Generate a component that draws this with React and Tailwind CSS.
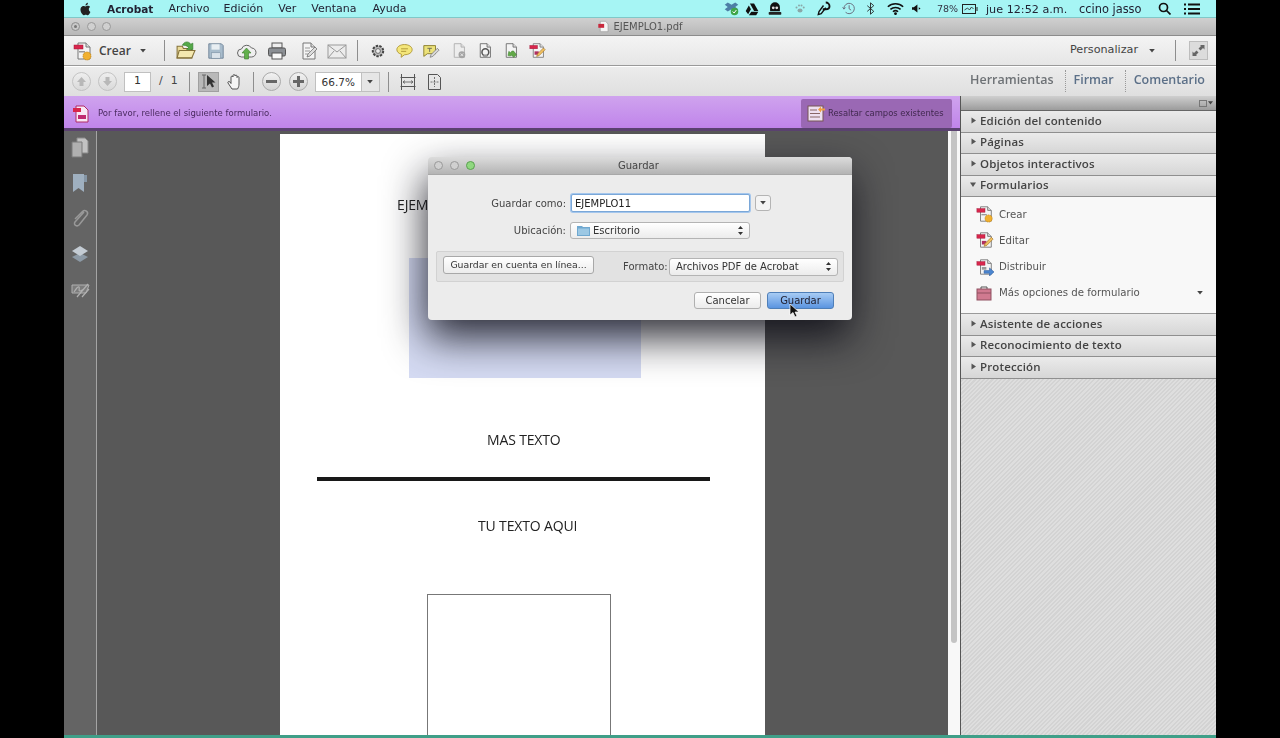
import React from 'react';

const font = { fontFamily: '"DejaVu Sans", sans-serif' };
const openSans = { fontFamily: '"Open Sans", sans-serif' };

// small page with a folded corner, shared by most toolbar icons
const Doc = ({ children, fill = '#f4f4f4', stroke = '#777' }) => (
  <>
    <path d="M5 2h8l4 4v12H5z" fill={fill} stroke={stroke} strokeWidth="1" />
    <path d="M13 2v4h4" fill="#ddd" stroke={stroke} strokeWidth="1" />
    {children}
  </>
);

const Ico = ({ w = 20, h = 20, children, className = '' }) => (
  <svg width={w} height={h} viewBox="0 0 20 20" className={`shrink-0 ${className}`}>{children}</svg>
);

const FormDoc = ({ children }) => (
  <Doc>
    <rect x="1" y="4" width="9" height="4" fill="#d8264c" stroke="#a01838" strokeWidth=".5" />
    {children}
  </Doc>
);

const EditarPaths = () => (
  <FormDoc>
    <rect x="6.5" y="11" width="5" height="4" fill="#b03060" />
    <path d="M9 17l1-3 7-7 2 2-7 7z" fill="#f0c060" stroke="#a07020" strokeWidth=".7" />
  </FormDoc>
);

const CrearIcon = ({ w = 20, h = 20 }) => (
  <Ico w={w} h={h}>
    <FormDoc>
      <rect x="6" y="10" width="6" height="1.5" fill="#999" />
      <circle cx="14" cy="15" r="4" fill="#f0b030" stroke="#b87a10" strokeWidth=".7" strokeDasharray="1.5 .7" />
    </FormDoc>
  </Ico>
);

const EditarIcon = ({ w = 18, h = 18 }) => (
  <Ico w={w} h={h}><EditarPaths /></Ico>
);

const DistIcon = ({ w = 18, h = 18 }) => (
  <Ico w={w} h={h}>
    <FormDoc>
      <rect x="6.5" y="10" width="5" height="3" fill="#999" />
      <path d="M9 14h6v-3l5 4.500-5 4.500v-3H9z" fill="#4b86d0" stroke="#2a5a9a" strokeWidth=".6" />
    </FormDoc>
  </Ico>
);

// status icons on the right of the menu bar
const MenuIcons = () => (
  <>
    <svg width="15" height="15" viewBox="0 0 20 20" className="absolute left-[660px] top-[1px]">
      <path d="M1 5l4-3 5 3 5-3 4 3-4 3 4 3-4 3-5-3-5 3-4-3 4-3z" fill="#4d7fa6" />
      <circle cx="14" cy="14" r="5" fill="#3fa648" />
      <path d="M11.5 14l2 2 3-4" fill="none" stroke="#fff" strokeWidth="1.3" />
    </svg>
    <svg width="14" height="14" viewBox="0 0 20 20" className="absolute left-[681px] top-[2px]">
      <path d="M7 2h6l6 11h-6zM5.5 5l3 5.500-4 7L1 13zM9 14h10l-3 5H5.500z" fill="#111" />
    </svg>
    <svg width="14" height="15" viewBox="0 0 20 20" className="absolute left-[704px] top-[1px]">
      <path d="M10 1a7 7 0 0 0-7 7v6h14V8a7 7 0 0 0-7-7z" fill="#111" />
      <circle cx="7.5" cy="9" r="2" fill="#ddd" />
      <circle cx="12.5" cy="9" r="2" fill="#ddd" />
      <rect x="1" y="15" width="18" height="4" rx="1" fill="#222" />
    </svg>
    <svg width="10" height="11" viewBox="0 0 20 20" className="absolute left-[731px] top-[3px]" fill="#8aa8a8">
      <ellipse cx="10" cy="14" rx="5" ry="4" />
      <circle cx="3" cy="8" r="2" />
      <circle cx="8" cy="4" r="2" />
      <circle cx="13" cy="4" r="2" />
      <circle cx="17.5" cy="8" r="2" />
    </svg>
    <svg width="15" height="15" viewBox="0 0 20 20" className="absolute left-[752px] top-[1px]" fill="none" stroke="#111">
      <path d="M13 2a5 5 0 0 1 5 5c0 3-3 4-5 4H9" strokeWidth="2.5" />
      <path d="M10 6l-6 8-1 4 4-1 6-8" strokeWidth="1.8" />
    </svg>
    <svg width="13" height="13" viewBox="0 0 20 20" className="absolute left-[778px] top-[2px]" fill="none" stroke="#667">
      <path d="M3 10a8 8 0 1 1 2.500 5.800" strokeWidth="1.4" />
      <path d="M11 5v5.500l3 2M1 8l2 3 2.500-2.500" strokeWidth="1.4" />
    </svg>
    <svg width="9" height="13" viewBox="0 0 10 16" className="absolute left-[802px] top-[2px]" fill="none" stroke="#222" strokeWidth="1.1">
      <path d="M1 4.500l8 7-4 3.500V1l4 3.500-8 7" />
    </svg>
    <svg width="17" height="13" viewBox="0 0 20 15" className="absolute left-[823px] top-[2px]" fill="none" stroke="#111" strokeWidth="1.8">
      <path d="M1 5.500a13 13 0 0 1 18 0M4 8.500a9 9 0 0 1 12 0M7 11.300a4.500 4.500 0 0 1 6 0" />
      <circle cx="10" cy="13.5" r=".8" fill="#111" />
    </svg>
    <svg width="9" height="9" viewBox="0 0 10 10" className="absolute left-[848px] top-[4px]" fill="#111">
      <path d="M0 3.500h2L6 .5v9l-4-3H0zM7.500 3.500l2 1.500-2 1.500z" />
    </svg>
    <span className="absolute left-[873px] top-[2px] text-[9.5px] leading-[13px] text-[#334]">78%</span>
    <svg width="16" height="10" viewBox="0 0 16 10" className="absolute left-[898px] top-[4px]" fill="none" stroke="#222">
      <rect x=".5" y=".5" width="13" height="9" />
      <path d="M15 3v4" />
      <path d="M2.500 6l3-2 2 2 2-3 2 2" strokeWidth=".8" />
    </svg>
    <span className="absolute left-[922px] top-[2px] text-[11.2px] leading-[15px] text-[#223]">jue 12:52 a.m.</span>
    <span className="absolute left-[1015px] top-[2px] text-[11.4px] leading-[15px] text-[#223]">ccino jasso</span>
    <svg width="13" height="13" viewBox="0 0 13 13" className="absolute left-[1094px] top-[2px]" fill="none" stroke="#111" strokeWidth="1.7">
      <circle cx="5.5" cy="5.5" r="4" />
      <path d="M8.500 8.500l4 4" />
    </svg>
    <svg width="16" height="12" viewBox="0 0 16 12" className="absolute left-[1120px] top-[3px]" fill="none" stroke="#111" strokeWidth="2">
      <path d="M4 1.500h12M4 6h12M4 10.500h12M0 1.500h2M0 6h2M0 10.500h2" />
    </svg>
  </>
);

const Sep = ({ h = 'h-[21px]', ml }) => <div className={`w-px bg-[#8e8e8e] ${h} ${ml}`} />;

const Caret = ({ className = '' }) => (
  <svg width="6" height="4" viewBox="0 0 7 5" className={className}><path d="M0 0h7L3.500 4.500z" fill="#444" /></svg>
);

const ToolbarOne = () => (
  <div className="flex h-[30px] items-center border-b border-[#9a9a9a] bg-gradient-to-b from-[#f4f4f4] to-[#e6e6e6] pl-[9px]">
    <CrearIcon />
    <span className="ml-[6px] w-[31px] text-[12px] font-semibold text-[#444]" style={openSans}>Crear</span>
    <Caret className="ml-[10px]" />
    <Sep ml="ml-[18px]" />
    <Ico w={21} h={21} className="ml-[10px]">
      <path d="M2 17V6h5l1 2h8v9z" fill="#eadb9a" stroke="#84713a" />
      <path d="M2 17l2-7h15l-3 7z" fill="#f4e8b0" stroke="#84713a" />
      <path d="M7 5c2-4 6-4 8-1l2-1v6h-6l2-2c-2-2-4-2-6-2z" fill="#54a848" stroke="#2f7a2a" strokeWidth=".6" />
    </Ico>
    <Ico w={18} h={18} className="ml-[11px]">
      <path d="M2 2h14l2 2v14H2z" fill="#a8bccc" stroke="#6c8196" />
      <rect x="5" y="2.5" width="9" height="6" fill="#e8eef2" />
      <rect x="5" y="12" width="10" height="6" fill="#dbe3ea" stroke="#6c8196" strokeWidth=".5" />
    </Ico>
    <Ico w={21} h={20} className="ml-[11px]">
      <path d="M5 16a4 4 0 0 1 0-8 5.500 5.500 0 0 1 10-1 4.500 4.500 0 0 1 0 9z" fill="#efefef" stroke="#666" />
      <path d="M10 7l4.500 5H12v6H8v-6H5.500z" fill="#62b04c" stroke="#3c7e2e" strokeWidth=".6" />
    </Ico>
    <Ico w={20} h={20} className="ml-[10px]">
      <rect x="5" y="2" width="10" height="5" fill="#eee" stroke="#555" />
      <rect x="1.5" y="7" width="17" height="8" rx="1.5" fill="#8b8f94" stroke="#555" />
      <rect x="5" y="12" width="10" height="6" fill="#fafafa" stroke="#555" />
    </Ico>
    <Ico w={20} h={20} className="ml-[11px]">
      <Doc><path d="M7 7h5M7 10h5M7 13h3" stroke="#999" /><path d="M9 16l1-3 7-7 2 2-7 7z" fill="#ddd" stroke="#666" strokeWidth=".7" /></Doc>
    </Ico>
    <Ico w={20} h={20} className="ml-[9px]">
      <rect x="1" y="4" width="18" height="13" fill="#ececec" stroke="#999" />
      <path d="M1 4l9 7 9-7M1 17l6-7M19 17l-6-7" fill="none" stroke="#999" />
    </Ico>
    <Sep ml="ml-[10px]" />
    <Ico w={16} h={16} className="ml-[12px]">
      <circle cx="10" cy="10" r="6.5" fill="#bbb" stroke="#444" strokeWidth="2.5" strokeDasharray="3 1.500" />
      <circle cx="10" cy="10" r="3" fill="#eee" stroke="#555" />
    </Ico>
    <Ico w={17} h={17} className="ml-[10px]">
      <path d="M10 3c5 0 9 2.500 9 6s-4 6-9 6l-4 3 .5-3.500C3 13.500 1 11.500 1 9c0-3.500 4-6 9-6z" fill="#f4e67a" stroke="#a89030" />
      <path d="M6 8h8M6 11h6" stroke="#a89030" />
    </Ico>
    <Ico w={18} h={18} className="ml-[9px]">
      <path d="M2 4h13v9H6l-4 3z" fill="#ece27a" stroke="#877a28" />
      <path d="M6 7h5M8.500 7v4" stroke="#665" />
      <path d="M9 17l1-3 7-7 2 2-7 7z" fill="#d8d8d8" stroke="#666" strokeWidth=".7" />
    </Ico>
    <Ico w={17} h={17} className="ml-[10px]">
      <Doc fill="#ededed" stroke="#aaa"><circle cx="14" cy="15" r="4" fill="#a4a4a4" /><path d="M12.500 13.500l3 3M15.500 13.500l-3 3" stroke="#eee" /></Doc>
    </Ico>
    <Ico w={17} h={17} className="ml-[9px]">
      <Doc stroke="#666"><circle cx="11" cy="12" r="4" fill="none" stroke="#555" strokeWidth="1.8" /><path d="M9 15l-1 4 3-1.500 3 1.500-1-4" fill="#999" /></Doc>
    </Ico>
    <Ico w={17} h={17} className="ml-[9px]">
      <Doc stroke="#666"><path d="M7 16l1-5 2 1.500c1-2 3-2.500 4-1.500l3 4-3 3-3-2.500-1 1z" fill="#62a848" stroke="#3c7e2e" strokeWidth=".6" /></Doc>
    </Ico>
    <Ico w={17} h={17} className="ml-[10px]">
      <EditarPaths />
    </Ico>
    <span className="ml-[524px] w-[67px] whitespace-nowrap text-[11.2px] text-[#444]">Personalizar</span>
    <Caret className="ml-[12px]" />
    <Sep ml="ml-[20px]" />
    <div className="ml-[13px] flex h-[19px] w-[19px] items-center justify-center border border-[#bdbdbd] bg-[#dcdcdc]">
      <svg width="15" height="15" viewBox="0 0 15 15" fill="#666">
        <path d="M9 2h4.500v4.500L12 5 9.500 7.500 7.500 5.500 10 3zM6 13H1.500V8.500L3 10l2.500-2.500 2 2L5 12z" />
      </svg>
    </div>
  </div>
);

const RoundBtn = ({ children, className = '' }) => (
  <div className={`flex h-[19px] w-[19px] shrink-0 items-center justify-center rounded-full border border-[#aaa] bg-gradient-to-b from-[#f2f2f2] to-[#d4d4d4] ${className}`}>
    {children}
  </div>
);

const ToolbarTwo = () => (
  <div className="flex h-[30px] items-center border-t border-white bg-gradient-to-b from-[#ececec] to-[#dfdfdf] pl-[8px]">
    <RoundBtn className="opacity-60">
      <svg width="11" height="11" viewBox="0 0 11 11" fill="#999"><path d="M5.500 1L10 6H7.500v4h-4V6H1z" /></svg>
    </RoundBtn>
    <RoundBtn className="ml-[7px] opacity-60">
      <svg width="11" height="11" viewBox="0 0 11 11" fill="#999"><path d="M5.500 10L10 5H7.500V1h-4v4H1z" /></svg>
    </RoundBtn>
    <div className="ml-[7px] flex h-[20px] w-[27px] items-center justify-center border border-[#c0c0c0] bg-white text-[11px] text-[#333]">1</div>
    <span className="ml-[8px] text-[11px] text-[#444]">/</span>
    <span className="ml-[8px] text-[11px] text-[#444]">1</span>
    <Sep ml="ml-[11px]" h="h-[20px]" />
    <div className="ml-[8px] flex h-[20px] w-[21px] items-center justify-center border border-[#a0a0a0] bg-[#b9b9b9]">
      <svg width="17" height="17" viewBox="0 0 17 17">
        <path d="M2 2h4M2 15h4M4 2v13" stroke="#666" fill="none" />
        <path d="M7 2v11l3-2.500 2 4 2-1-2-4h3.500z" fill="#333" />
      </svg>
    </div>
    <svg width="17" height="18" viewBox="0 0 17 18" className="ml-[8px]" fill="#f5f5f5" stroke="#444" strokeWidth=".9">
      <path d="M5 16c-1-2-3-4-4-6-.7-1.400 1-2 2-1l1 1.500V4c0-1.200 2-1.200 2 0V2.500c0-1.200 2-1.200 2 0V3c0-1.200 2-1.200 2 0v1.500c0-1.200 2-1.200 2 0V11c0 2-.5 3.500-1.500 5z" />
    </svg>
    <Sep ml="ml-[9px]" h="h-[20px]" />
    <RoundBtn className="ml-[8px]">
      <div className="h-[3px] w-[11px] bg-[#666]" />
    </RoundBtn>
    <RoundBtn className="ml-[8px]">
      <svg width="13" height="13" viewBox="0 0 13 13" fill="#666"><path d="M5 1h3v4h4v3H8v4H5V8H1V5h4z" /></svg>
    </RoundBtn>
    <div className="ml-[7px] flex h-[20px] w-[65px] border border-[#c0c0c0] bg-white">
      <span className="flex-1 text-center text-[10.5px] leading-[18px] text-[#333]">66.7%</span>
      <div className="flex w-[18px] items-center justify-center border-l border-[#c0c0c0] bg-[#e6e6e6]"><Caret /></div>
    </div>
    <Sep ml="ml-[8px]" h="h-[20px]" />
    <svg width="16" height="18" viewBox="0 0 16 18" className="ml-[11px]" fill="none" stroke="#555">
      <path d="M.5 4.500h15M.5 13.500h15M1.500 1v16M14.500 1v16" />
      <path d="M3 9h10M3 9l2-1.500M3 9l2 1.500M13 9l-2-1.500M13 9l-2 1.500" strokeWidth=".8" />
    </svg>
    <svg width="15" height="18" viewBox="0 0 15 18" className="ml-[11px]" fill="none" stroke="#555">
      <path d="M1.500 1.500h9l3 3v12h-12z" />
      <path d="M7.500 4v10M3.500 9h8" strokeWidth=".8" strokeDasharray="2 1" />
    </svg>
    <div className="ml-auto flex h-[30px] items-center pb-[2px] pr-[11px] text-[12.5px] font-semibold" style={openSans}>
      <span className="text-[#6e7276]">Herramientas</span>
      <div className="ml-[11px] h-[22px] border-l border-dotted border-[#999]" />
      <span className="ml-[8px] text-[#5c7088]">Firmar</span>
      <div className="ml-[11px] h-[22px] border-l border-dotted border-[#999]" />
      <span className="ml-[8px] text-[#5c7088]">Comentario</span>
    </div>
  </div>
);

const NoticeBar = () => (
  <div className="flex h-[35px] shrink-0 items-center border-b-[3px] border-[#5b4270] bg-gradient-to-b from-[#cfa3ee] to-[#c084ea] pl-[7px] pr-[8px] pt-[3px]">
    <svg width="20" height="20" viewBox="0 0 20 20">
      <path d="M5 2h8l4 4v12H5z" fill="#f8e8f4" stroke="#b02a66" />
      <rect x="2" y="4" width="8" height="4" fill="#d8264c" />
      <rect x="7" y="11" width="8" height="4" fill="#c02a70" />
    </svg>
    <span className="ml-[7px] text-[8.5px] text-[#4a2a60]">Por favor, rellene el siguiente formulario.</span>
    <div className="ml-auto flex h-[29px] w-[151px] items-center rounded-[2px] bg-[#9a68b4] pl-[6px]">
      <svg width="18" height="17" viewBox="0 0 18 17">
        <rect x="1" y="1" width="15" height="15" fill="#eee0f0" stroke="#755" />
        <path d="M3 5h7M3 8.500h10M3 12h10" stroke="#866" />
        <path d="M11 4.500l3-3v2h4v2h-4v2z" fill="#f0a040" />
      </svg>
      <span className="ml-[3px] whitespace-nowrap text-[8.4px] text-[#40284e]">Resaltar campos existentes</span>
    </div>
  </div>
);

const LeftRail = () => (
  <div className="flex w-[33px] shrink-0 flex-col items-center gap-[15px] border-r border-[#a4a4a4] bg-[#646464] pt-[6px]">
    <svg width="20" height="21" viewBox="0 0 20 21">
      <path d="M7 1h8l3 3v12H7z" fill="#c2c2c2" stroke="#8a8a8a" />
      <path d="M2 5h10v15H2z" fill="#b0b0b0" stroke="#7a7a7a" />
    </svg>
    <svg width="16" height="20" viewBox="0 0 16 20">
      <path d="M1 1h11v18l-5.500-4L1 19z" fill="#9fb0c0" />
      <path d="M12 2h3v7h-3z" fill="#8596a6" />
    </svg>
    <svg width="20" height="21" viewBox="0 0 20 21" fill="none" stroke="#999" strokeWidth="1.5">
      <path d="M14 4L5 14c-2 3 2 5 4 3l8-10c2-3-2-6-4.500-3.500L5 11" />
    </svg>
    <svg width="18" height="20" viewBox="0 0 18 18">
      <path d="M9 8l8 4-8 5-8-5z" fill="#8d9aa6" />
      <path d="M9 1l8 5-8 5-8-5z" fill="#c4ccd4" />
    </svg>
    <svg width="19" height="17" viewBox="0 0 19 15" fill="none" stroke="#b0b0b0" className="mt-[3px]">
      <path d="M1 2h17l-3 8H1z" fill="#7c7c7c" />
      <path d="M3 9c2-3 4-6 5-5s-1 4 1 4 2-2 3-1M6 14L17 1M11 14l7-8" strokeWidth="1.2" />
    </svg>
  </div>
);

const PdfPage = () => (
  <div className="ml-[183px] h-[601px] w-[485px] shrink-0 overflow-hidden bg-white text-[14px] leading-[20px] tracking-[-0.15px] text-[#222]" style={openSans}>
    <div className="ml-[117px] mt-[61px]">EJEMPLO</div>
    <div className="ml-[129px] mt-[43px] h-[120px] w-[232px] bg-[#d5dbf3]" />
    <div className="ml-[207px] mt-[52px]">MAS TEXTO</div>
    <div className="ml-[37px] mt-[27px] h-[4px] w-[393px] bg-[#181818]" />
    <div className="ml-[198px] mt-[35px]">TU TEXTO AQUI</div>
    <div className="ml-[147px] mt-[58px] h-[200px] w-[184px] border border-[#777]" />
  </div>
);

const PanelRow = ({ label, open }) => (
  <div className="flex h-[21.5px] shrink-0 items-center border-b border-[#8f8f8f] bg-gradient-to-b from-[#ebebeb] to-[#d6d6d6] pb-[2px] pl-[9px] text-[11.5px] font-semibold tracking-[0.15px] text-[#444]" style={openSans}>
    <svg width="7" height="7" viewBox="0 0 7 7" fill="#555">
      <path d={open ? 'M0 1.500h6L3 6z' : 'M1.500 0.500L6 3.500 1.500 6.500z'} />
    </svg>
    <span className="ml-[3px]">{label}</span>
  </div>
);

const FormItem = ({ icon, label, caret }) => (
  <div className="flex h-[26.2px] items-center pl-[15px] pr-[13px] text-[10.2px] text-[#555]">
    <div className="flex w-[23px]">{icon}</div>
    <span>{label}</span>
    {caret && <Caret className="ml-auto" />}
  </div>
);

const RightPanel = () => (
  <div className="flex w-[256px] shrink-0 flex-col border-l border-[#555] bg-[repeating-linear-gradient(135deg,#d3d3d3_0,#d3d3d3_1.5px,#dedede_1.5px,#dedede_3px)]">
    <div className="flex h-[15px] shrink-0 items-center justify-end border-b border-[#666] bg-gradient-to-b from-[#cfcfcf] to-[#9c9c9c] pr-[3px]">
      <div className="h-[7px] w-[8px] border border-[#777]" />
      <Caret className="ml-[1px] w-[5px]" />
    </div>
    <PanelRow label="Edición del contenido" />
    <PanelRow label="Páginas" />
    <PanelRow label="Objetos interactivos" />
    <PanelRow label="Formularios" open />
    <div className="flex h-[117px] shrink-0 flex-col justify-center border-b border-[#9a9a9a] bg-[#f8f8f8] pb-[3px]">
      <FormItem icon={<CrearIcon w={18} h={18} />} label="Crear" />
      <FormItem icon={<EditarIcon />} label="Editar" />
      <FormItem icon={<DistIcon />} label="Distribuir" />
      <FormItem
        label="Más opciones de formulario"
        caret
        icon={
          <svg width="16" height="16" viewBox="0 0 16 16">
            <path d="M5 4V2h6v2" fill="none" stroke="#555" />
            <rect x="1" y="4" width="14" height="11" fill="#d07a90" stroke="#8f5060" />
            <path d="M1 8h14" stroke="#8f5060" />
          </svg>
        }
      />
    </div>
    <PanelRow label="Asistente de acciones" />
    <PanelRow label="Reconocimiento de texto" />
    <PanelRow label="Protección" />
  </div>
);

const SelectBox = ({ children, className = '' }) => (
  <div className={`flex items-center rounded-[3px] border border-[#b4b4b4] bg-gradient-to-b from-white to-[#ececec] px-[6px] text-[10px] text-[#333] ${className}`}>
    {children}
    <svg width="5" height="9" viewBox="0 0 5 9" className="ml-auto" fill="#333">
      <path d="M2.500 0L5 3H0zM2.500 9L0 6h5z" />
    </svg>
  </div>
);

// the save sheet floats over the page, so it is positioned
const SaveDialog = () => (
  <div className="absolute left-[364px] top-[157px] h-[163px] w-[424px] rounded-[4px] bg-[#ececec] text-[10px] text-[#444] shadow-[-2px_18px_40px_rgba(10,10,20,0.85)]">
    <div className="flex h-[18px] items-center rounded-t-[4px] border-b border-[#a8a8a8] bg-gradient-to-b from-[#dcdcdc] to-[#b4b4b4] pl-[6px]">
      <div className="h-[9px] w-[9px] rounded-full border border-[#999] bg-[#d0d0d0]" />
      <div className="ml-[7px] h-[9px] w-[9px] rounded-full border border-[#999] bg-[#d0d0d0]" />
      <div className="ml-[7px] h-[9px] w-[9px] rounded-full border border-[#5aa050] bg-[#90d880]" />
      <span className="ml-[143px] text-[10px] text-[#444]">Guardar</span>
    </div>
    <div className="mt-[19px] flex items-center">
      <span className="w-[138px] text-right">Guardar como:</span>
      <div className="ml-[5px] flex h-[18px] w-[179px] items-center rounded-[2px] border border-[#7aa7d8] bg-white pl-[3px] text-[#222] shadow-[0_0_0_1px_#a4c6ec]">EJEMPLO11</div>
      <div className="ml-[5px] flex h-[16px] w-[16px] items-center justify-center rounded-[3px] border border-[#b4b4b4] bg-[#f4f4f4]"><Caret /></div>
    </div>
    <div className="mt-[10px] flex items-center">
      <span className="w-[138px] text-right">Ubicación:</span>
      <SelectBox className="ml-[4px] h-[17px] w-[180px]">
        <svg width="13" height="11" viewBox="0 0 13 11" className="mr-[3px]">
          <path d="M0 1h5l1 1h7v9H0z" fill="#6fa8d0" />
          <path d="M1 3.500h11V10H1z" fill="#9cc8e4" />
        </svg>
        Escritorio
      </SelectBox>
    </div>
    <div className="mx-[8px] mt-[12px] flex h-[31px] items-center rounded-[2px] border border-[#d2d2d2] bg-[#e2e2e2] pl-[6px] pr-[5px]">
      <div className="mb-[3px] flex h-[18px] w-[151px] items-center justify-center whitespace-nowrap rounded-[3px] border border-[#a8a8a8] bg-gradient-to-b from-white to-[#ececec] text-[9.3px] text-[#333]">Guardar en cuenta en línea...</div>
      <span className="ml-[29px]">Formato:</span>
      <SelectBox className="ml-auto h-[18px] w-[169px]">Archivos PDF de Acrobat</SelectBox>
    </div>
    <div className="mt-[10px] flex justify-end gap-[6px] pr-[18px]">
      <div className="flex h-[17px] w-[67px] items-center justify-center rounded-[3px] border border-[#b0b0b0] bg-gradient-to-b from-white to-[#ececec] text-[#333]">Cancelar</div>
      <div className="flex h-[17px] w-[67px] items-center justify-center rounded-[3px] border border-[#4f7fb8] bg-gradient-to-b from-[#a8ccf4] to-[#5a94e0] text-[#223]">Guardar</div>
    </div>
    <svg width="11" height="15" viewBox="0 0 11 15" className="absolute left-[361px] top-[146px]">
      <path d="M1 1v11l3-2.500 2 4.500 2-1-2-4h4z" fill="#111" stroke="#fff" strokeWidth=".7" />
    </svg>
  </div>
);

export default function App() {
  return (
    <div className="relative h-[738px] w-[1280px] overflow-hidden bg-black pl-[64px]" style={font}>
      {/* the reference is a soft video frame, hence the slight blur */}
      <div className="relative flex h-[738px] w-[1152px] flex-col blur-[0.4px]">
        {/* mac menu bar */}
        <div className="relative flex h-[18px] shrink-0 items-center border-b border-[#7fc8c8] bg-[#a6f5f4] pl-[16px] text-[11px] text-[#223]">
          <svg width="12" height="14" viewBox="0 0 12 14" fill="#222">
            <path d="M8.800 7.300c0-1.500 1.200-2.200 1.300-2.300-.7-1-1.800-1.200-2.200-1.200-.9-.1-1.800.6-2.300.6s-1.200-.6-2-.5C2.500 3.900 1.500 4.500 1 5.400c-1.100 1.900-.3 4.700.8 6.200.5.800 1.100 1.600 1.900 1.600.8 0 1-.5 2-.5s1.200.5 2 .5 1.300-.8 1.800-1.500c.6-.8.800-1.700.9-1.700-.1 0-1.600-.7-1.600-2.700zM7.300 2.700C7.700 2.200 8 1.500 7.900.8c-.6 0-1.400.4-1.800.9-.4.4-.7 1.100-.6 1.800.7 0 1.400-.4 1.800-.8z" />
          </svg>
          <span className="ml-[15px] pt-[2px] text-[10.5px] font-bold">Acrobat</span>
          <span className="ml-[15px] pt-[2px]">Archivo</span>
          <span className="ml-[14px] pt-[2px]">Edición</span>
          <span className="ml-[15px] pt-[2px]">Ver</span>
          <span className="ml-[15px] pt-[2px]">Ventana</span>
          <span className="ml-[16px] pt-[2px]">Ayuda</span>
          <MenuIcons />
        </div>
        {/* window title */}
        <div className="relative flex h-[18px] shrink-0 items-center justify-center border-b border-[#8c8c8c] bg-gradient-to-b from-[#d0d0d0] to-[#b8b8b8] text-[10px] text-[#555]">
          <div className="absolute left-[7px] top-[4px] flex gap-[6.5px]">
            <div className="flex h-[9px] w-[9px] items-center justify-center rounded-full border border-[#8e8e8e] bg-[#c8c8c8]">
              <div className="h-[3px] w-[3px] rounded-full bg-[#777]" />
            </div>
            <div className="h-[9px] w-[9px] rounded-full border border-[#999] bg-[#d0d0d0]" />
            <div className="h-[9px] w-[9px] rounded-full border border-[#999] bg-[#d0d0d0]" />
          </div>
          <svg width="13" height="13" viewBox="0 0 20 20" className="mr-[3px]">
            <path d="M5 2h8l4 4v12H5z" fill="#f4f4f4" stroke="#999" />
            <rect x="2" y="6" width="9" height="6" fill="#c8283c" />
          </svg>
          EJEMPLO1.pdf
        </div>
        <ToolbarOne />
        <ToolbarTwo />
        <div className="flex min-h-0 flex-1">
          <div className="flex w-[896px] shrink-0 flex-col">
            <NoticeBar />
            {/* document area */}
            <div className="flex min-h-0 flex-1">
              <LeftRail />
              <div className="flex w-[851px] shrink-0 bg-[#585858] pt-[3px]">
                <PdfPage />
              </div>
              <div className="w-[12px] shrink-0 bg-[#f8f8f8] px-[3px]">
                <div className="h-[512px] rounded-b-[3px] bg-[#c4c4c4]" />
              </div>
            </div>
          </div>
          <RightPanel />
        </div>
        <div className="h-[3px] shrink-0 bg-[#3f9f88]" />
        <SaveDialog />
      </div>
    </div>
  );
}
